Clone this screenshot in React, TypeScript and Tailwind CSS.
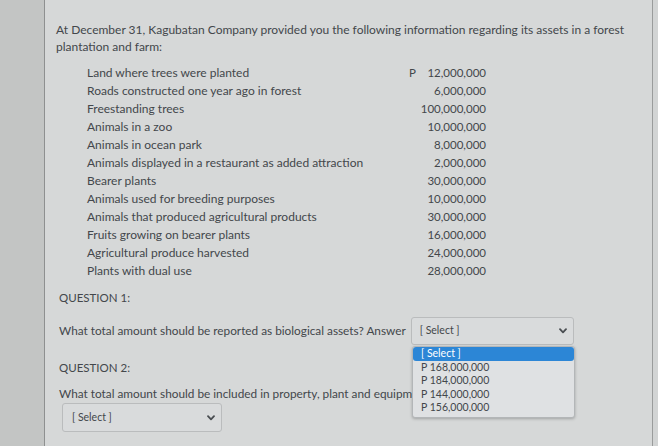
import React from "react";

const rows: [string, string][] = [
  ["Land where trees were planted", "12,000,000"],
  ["Roads constructed one year ago in forest", "6,000,000"],
  ["Freestanding trees", "100,000,000"],
  ["Animals in a zoo", "10,000,000"],
  ["Animals in ocean park", "8,000,000"],
  ["Animals displayed in a restaurant as added attraction", "2,000,000"],
  ["Bearer plants", "30,000,000"],
  ["Animals used for breeding purposes", "10,000,000"],
  ["Animals that produced agricultural products", "30,000,000"],
  ["Fruits growing on bearer plants", "16,000,000"],
  ["Agricultural produce harvested", "24,000,000"],
  ["Plants with dual use", "28,000,000"],
];

const options = ["P 168,000,000", "P 184,000,000", "P 144,000,000", "P 156,000,000"];

function Chevron() {
  return (
    <svg width="8" height="6" viewBox="0 0 8 6" className="shrink-0">
      <path d="M1 1.2 L4 4.4 L7 1.2" fill="none" stroke="#4a4e52" strokeWidth="1.8" strokeLinecap="round" strokeLinejoin="round" />
    </svg>
  );
}

export default function App() {
  return (
    <div
      className="flex h-[446px] w-[658px] overflow-hidden text-[#43474b]"
      style={{ fontFamily: "Lato, 'Open Sans', sans-serif" }}
    >
      <div className="w-[45px] shrink-0 border-r border-[#8e9090] bg-[#c3c5c4]" />
      <div className="relative flex-1 bg-[#d6d8d8] pl-[11px] pr-[4px] pt-[21px]">
        <p className="text-[12px] leading-[17px]">
          At December 31, Kagubatan Company provided you the following information regarding its assets in a forest plantation and farm:
        </p>

        <div className="mt-[9px] grid grid-cols-[322px_77px] pl-[31px] text-[12px] leading-[18px]">
          {rows.map(([label, value], i) => (
            <React.Fragment key={label}>
              <div className="whitespace-nowrap">{label}</div>
              {i === 0 ? (
                <div className="flex justify-between text-[11.5px]">
                  <span>P</span>
                  <span>{value}</span>
                </div>
              ) : (
                <div className="text-right text-[11.5px]">{value}</div>
              )}
            </React.Fragment>
          ))}
        </div>

        <div className="mt-[9px] pl-[3px] text-[11.5px] leading-[17px]">QUESTION 1:</div>

        <div className="relative mt-[11px] flex items-center pl-[3px] text-[11.8px]">
          <span className="whitespace-nowrap">What total amount should be reported as biological assets? Answer</span>
          <div className="ml-[5px] flex h-[28px] w-[163px] items-center justify-between rounded-[3px] border border-[#babcbd] bg-[#d9dbdc] pl-[8px] pr-[6px] text-[10.5px]">
            <span>[ Select ]</span>
            <Chevron />
          </div>
        </div>

        <div className="mt-[14px] pl-[3px] text-[11.5px] leading-[17px]">QUESTION 2:</div>

        <div className="mt-[9px] whitespace-nowrap pl-[3px] text-[11.8px] leading-[17px]">
          What total amount should be included in property, plant and equipment? Answer
        </div>

        <div className="ml-[6px] mt-[1px] flex h-[29px] w-[160px] items-center justify-between rounded-[3px] border border-[#babcbd] bg-[#d9dbdc] pl-[9px] pr-[6px] text-[10.5px]">
          <span>[ Select ]</span>
          <Chevron />
        </div>

        <div className="absolute left-[367px] top-[346px] w-[163px] rounded-[3px] border border-[#b3b6b8] bg-[#dfe1e3] pb-[2px] text-[10.5px] leading-[13.6px] shadow-[0_1px_3px_rgba(0,0,0,0.25)]">
          <div className="rounded-[3px] bg-[#2c86d6] px-[8px] text-white">[ Select ]</div>
          {options.map((o) => (
            <div key={o} className="px-[8px]">
              {o}
            </div>
          ))}
        </div>
      </div>
      <div className="w-[6px] shrink-0 border-l border-[#9a9c9c] bg-[#d2d4d4]" />
    </div>
  );
}
